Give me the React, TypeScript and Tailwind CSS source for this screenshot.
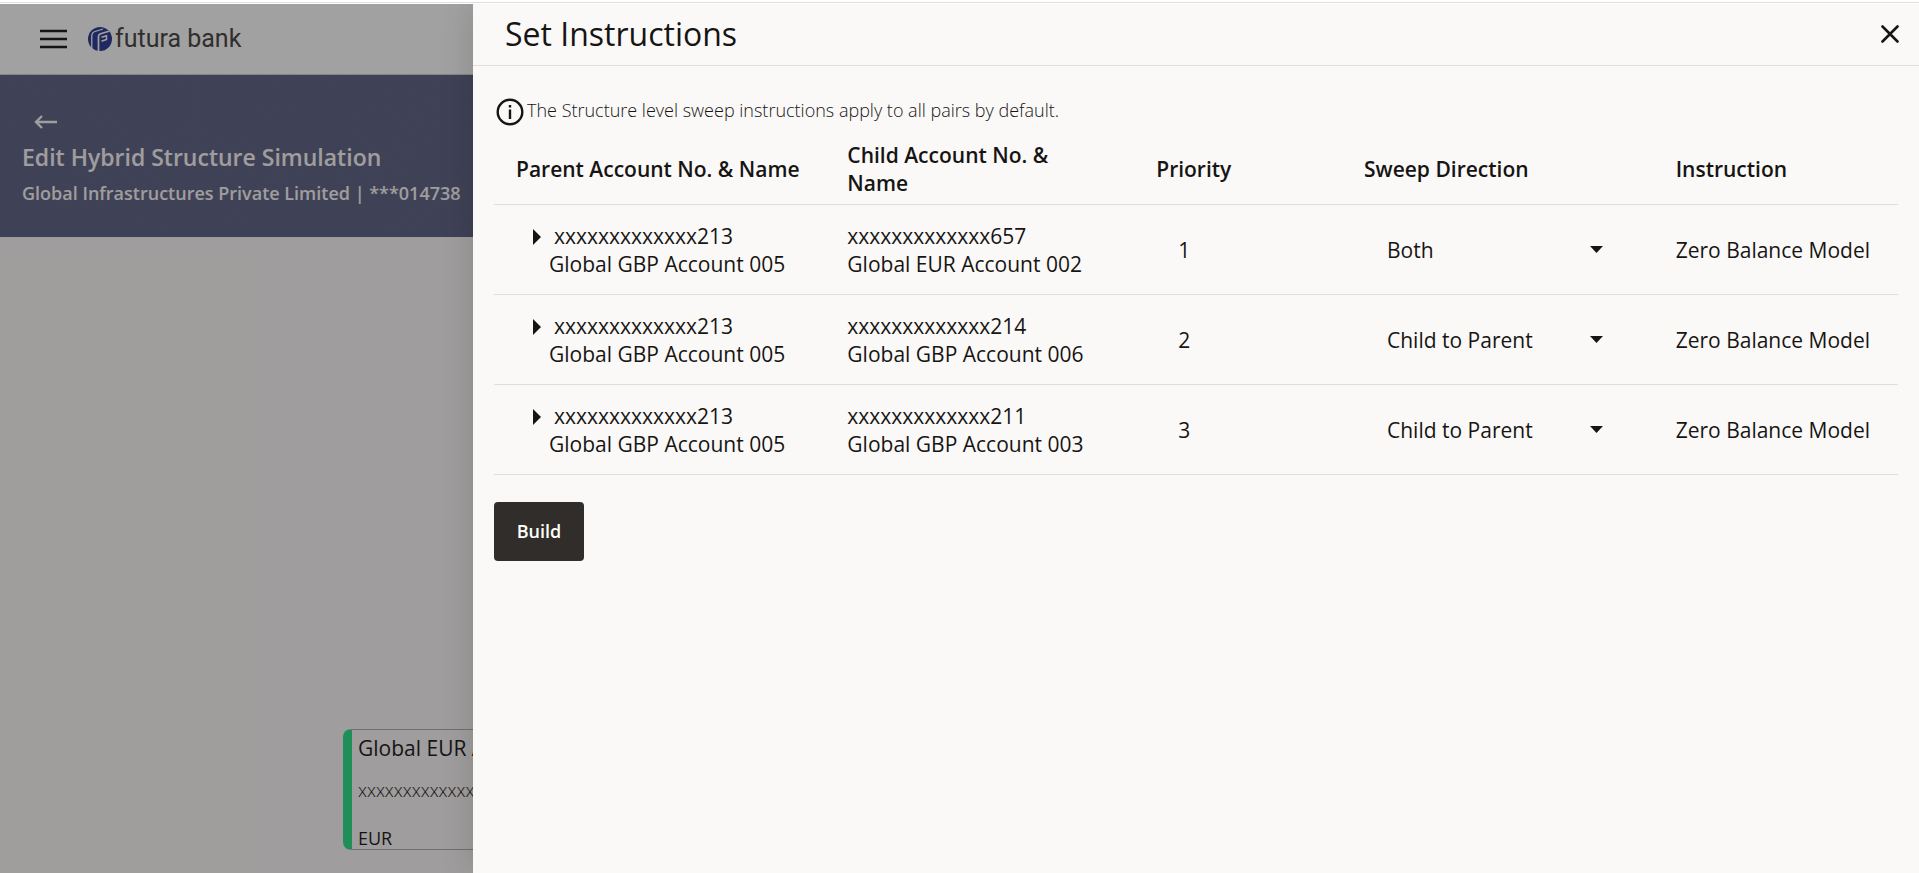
const ROWS = [
  { parent: "xxxxxxxxxxxxx213", parentName: "Global GBP Account 005", child: "xxxxxxxxxxxxx657", childName: "Global EUR Account 002", priority: 1, direction: "Both" },
  { parent: "xxxxxxxxxxxxx213", parentName: "Global GBP Account 005", child: "xxxxxxxxxxxxx214", childName: "Global GBP Account 006", priority: 2, direction: "Child to Parent" },
  { parent: "xxxxxxxxxxxxx213", parentName: "Global GBP Account 005", child: "xxxxxxxxxxxxx211", childName: "Global GBP Account 003", priority: 3, direction: "Child to Parent" },
];

const DIRECTIONS = ["Both", "Child to Parent", "Parent to Child"];

const RING_RADII = [10, 20, 30, 40, 50, 60, 70, 80, 90, 100];

function Logo() {
  return (
    <div className="flex items-center gap-[3px]">
      <svg width="24" height="24" viewBox="0 0 24 24" aria-hidden="true">
        <circle cx="12" cy="12" r="12" fill="#273693" />
        <path d="M3.800 22V9Q3.800 5.500 7 4.500L15 2" fill="none" stroke="#fff" strokeWidth="1.300" />
        <path d="M10.500 24V9.500Q10.500 7.300 12.500 6.700L21 4.300" fill="none" stroke="#fff" strokeWidth="1.700" />
        <path d="M13.500 10.300L18.500 8.800V12.500L13.500 14.300" fill="none" stroke="#fff" strokeWidth="1.500" />
      </svg>
      <span className="font-[Roboto] text-[25px] leading-8 text-[#444140]">futura bank</span>
    </div>
  );
}

// faint contour rings behind the page title
function BannerTexture() {
  return (
    <svg className="absolute inset-0 size-full" aria-hidden="true">
      <g fill="none" stroke="#fff" strokeOpacity="0.015" strokeWidth="2">
        {RING_RADII.map((r) => (
          <g key={r}>
            <ellipse cx="70" cy="30" rx={r * 1.3} ry={r} />
            <ellipse cx="310" cy="20" rx={r * 1.3} ry={r} />
            <ellipse cx="190" cy="160" rx={r * 1.4} ry={r} />
            <ellipse cx="440" cy="120" rx={r} ry={r * 1.2} />
          </g>
        ))}
      </g>
    </svg>
  );
}

function StructurePage() {
  return (
    <div className="min-h-screen bg-[#fbf9f8] pt-1">
      <header className="flex h-[71px] items-center gap-5 border-b border-[#d0d0d0] bg-white px-10">
        <button type="button" aria-label="Open menu">
          <svg width="28" height="20" viewBox="0 0 28 20" stroke="currentColor" strokeWidth="2.4">
            <path d="M0 2h27M0 10h27M0 18h27" />
          </svg>
        </button>
        <Logo />
      </header>

      <div className="relative h-[162px] bg-[#5a6083] text-[#fbf9f8]">
        <BannerTexture />
        <div className="relative flex flex-col items-start px-[22px] pt-9 whitespace-nowrap">
          <button type="button" aria-label="Back" className="ml-3">
            <svg width="24" height="20" viewBox="0 0 24 20" fill="none" stroke="currentColor" strokeWidth="2.4">
              <path d="M23 11H2M8 5L2 11l6 6" />
            </svg>
          </button>
          <h1 className="mt-2.5 text-[23px] leading-8 font-semibold">Edit Hybrid Structure Simulation</h1>
          <p className="mt-1.5 text-[18px] leading-7 font-semibold">Global Infrastructures Private Limited | ***014738</p>
        </div>
      </div>

      {/* node on the structure canvas */}
      <div className="absolute top-[729px] left-[343px] h-[121px] w-[300px] rounded-lg border border-l-[9px] border-[#b0aeac] border-l-[#27df86] pl-1.5 whitespace-nowrap">
        <p className="mt-1 text-[21px] leading-7">Global EUR Account 002</p>
        <p className="mt-4 text-[18px] leading-6 font-light">xxxxxxxxxxxxx657</p>
        <p className="mt-5 text-[18px] leading-8">EUR</p>
      </div>
    </div>
  );
}

function InstructionsTable() {
  return (
    <table className="w-full table-fixed border-collapse text-left text-[21px] leading-7">
      <colgroup>
        <col className="w-[23.6%]" />
        <col className="w-[22%]" />
        <col className="w-[14.8%]" />
        <col className="w-[22.2%]" />
        <col />
      </colgroup>
      <thead>
        <tr className="h-[78px] border-b border-[#dfdedd]">
          <th className="px-[22px] pt-2 font-semibold whitespace-nowrap">Parent Account No. &amp; Name</th>
          <th className="px-[22px] pt-2 font-semibold">Child Account No. &amp; Name</th>
          <th className="px-[22px] pt-2 font-semibold">Priority</th>
          <th className="px-[22px] pt-2 font-semibold">Sweep Direction</th>
          <th className="px-[22px] pt-2 font-semibold">Instruction</th>
        </tr>
      </thead>
      <tbody>
        {ROWS.map((row) => (
          <tr key={row.priority} className="h-[90px] border-b border-[#dfdedd]">
            <td className="pt-0.5 whitespace-nowrap">
              <button type="button" className="ml-[39px] flex items-center gap-3">
                <svg className="mt-0.5" width="9" height="18" viewBox="0 0 9 18" fill="currentColor" aria-hidden="true">
                  <path d="M0 1l8 8-8 8z" />
                </svg>
                {row.parent}
              </button>
              <div className="pl-[55px]">{row.parentName}</div>
            </td>
            <td className="px-[22px] pt-0.5 whitespace-nowrap">
              {row.child}
              <br />
              {row.childName}
            </td>
            <td className="px-11 pt-0.5">{row.priority}</td>
            <td className="pt-0.5">
              <div className="relative ml-[45px] w-[216px]">
                <select
                  aria-label={"Sweep direction, priority " + row.priority}
                  defaultValue={row.direction}
                  className="w-full appearance-none bg-transparent"
                >
                  {DIRECTIONS.map((d) => (
                    <option key={d}>{d}</option>
                  ))}
                </select>
                <svg className="pointer-events-none absolute top-2.5 right-0" width="13" height="7" fill="currentColor" aria-hidden="true">
                  <path d="M0 0h13L6.500 7z" />
                </svg>
              </div>
            </td>
            <td className="pt-0.5 pl-[22px] whitespace-nowrap">Zero Balance Model</td>
          </tr>
        ))}
      </tbody>
    </table>
  );
}

export default function App() {
  return (
    <div className="relative h-screen overflow-hidden bg-white font-['Open_Sans',sans-serif] text-[#161513]">
      <StructurePage />
      <div className="absolute inset-x-0 top-1 bottom-0 bg-[#161513]/40" />

      <aside role="dialog" aria-labelledby="drawer-title" className="absolute top-1 right-0 bottom-0 left-[473px] bg-[#fbf9f8] shadow-[0_0_32px_rgba(0,0,0,0.15)]">
        <header className="flex h-[62px] items-center justify-between border-b border-[#dfdedd] pr-5 pb-0.5 pl-8">
          <h2 id="drawer-title" className="text-[32px] leading-10">Set Instructions</h2>
          <button type="button" aria-label="Close">
            <svg width="18" height="18" viewBox="0 0 18 18" stroke="currentColor" strokeWidth="2.6" strokeLinecap="round">
              <path d="M1.500 1.500l15 15M16.500 1.500l-15 15" />
            </svg>
          </button>
        </header>

        <div className="px-[21px] pt-8">
          <div className="flex items-start gap-[3px] pl-0.5">
            <svg width="28" height="28" viewBox="0 0 28 28" fill="none" stroke="currentColor" strokeWidth="2.4" aria-hidden="true">
              <circle cx="14" cy="14" r="12.300" />
              <path d="M14 11.500v9.500M14 7v2.600" />
            </svg>
            <p className="text-[18px] leading-6 font-light">The Structure level sweep instructions apply to all pairs by default.</p>
          </div>
          <InstructionsTable />
          <button type="button" className="mt-[27px] h-[59px] w-[90px] rounded bg-[#312d2a] text-[18px] font-semibold text-white">
            Build
          </button>
        </div>
      </aside>

      <div className="absolute inset-x-0 top-0 flex h-1 flex-col justify-center bg-white">
        <div className="h-px bg-[#dfdfdf]" />
      </div>
    </div>
  );
}
